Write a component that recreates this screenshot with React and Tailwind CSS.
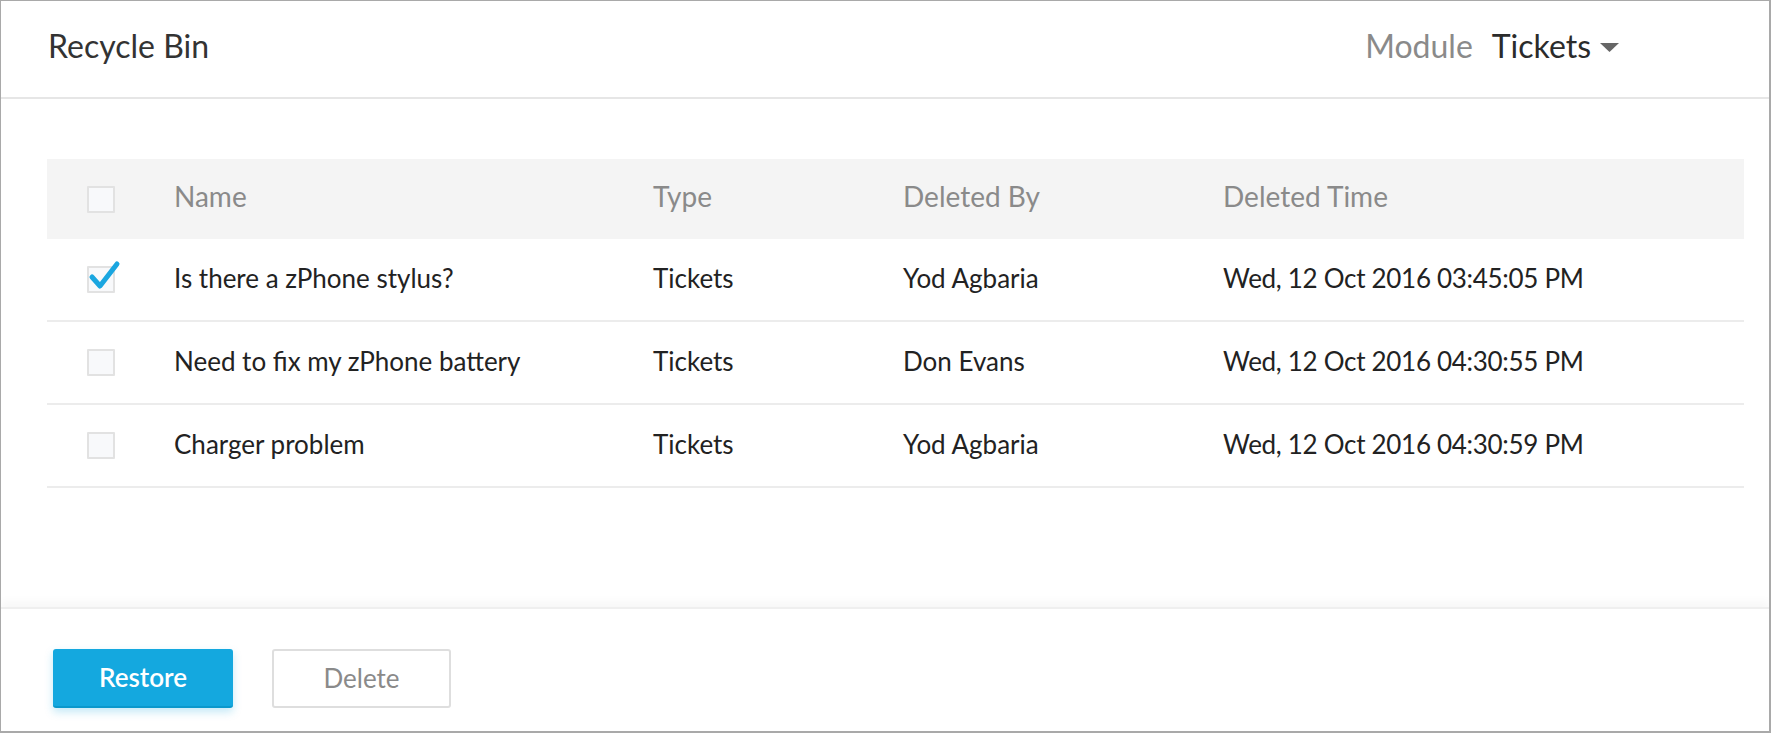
import { useState } from 'react';

const rows = [
  { id: 1, name: 'Is there a zPhone stylus?', type: 'Tickets', by: 'Yod Agbaria', time: 'Wed, 12 Oct 2016 03:45:05 PM' },
  { id: 2, name: 'Need to fix my zPhone battery', type: 'Tickets', by: 'Don Evans', time: 'Wed, 12 Oct 2016 04:30:55 PM' },
  { id: 3, name: 'Charger problem', type: 'Tickets', by: 'Yod Agbaria', time: 'Wed, 12 Oct 2016 04:30:59 PM' },
];

function Checkbox({ checked, onChange }) {
  return (
    <button type="button" onClick={onChange} className="relative w-[28px] h-[27px] border-2 border-[#e2e2e2] bg-[#f8f9fb] rounded-[1px]">
      {checked && (
        <svg className="absolute -left-[2px] -top-[9px] w-[34px] h-[34px]" viewBox="0 0 34 34" fill="none">
          <path d="M5 18 L13 27 L30 5" stroke="#1aa6e0" strokeWidth="5" strokeLinecap="round" strokeLinejoin="round" />
        </svg>
      )}
    </button>
  );
}

export default function App() {
  const [selected, setSelected] = useState([1]);

  const toggle = (id) =>
    setSelected((s) => (s.includes(id) ? s.filter((x) => x !== id) : [...s, id]));

  return (
    <div className="w-[1771px] h-[733px] flex flex-col bg-white border-l border-t border-r-2 border-b-2 border-[#a9a9a9] font-['Lato',sans-serif] overflow-hidden">
      <div className="h-[98px] shrink-0 flex items-center justify-between pl-[47px] pr-[150px] pb-[7px] border-b-2 border-[#e6e6e6]">
        <h1 className="text-[32px] text-[#333] leading-none">Recycle Bin</h1>
        <div className="flex items-center text-[32px] leading-none">
          <span className="text-[#8a8a8a]">Module</span>
          <span className="ml-[19px] text-[#2b2b2b]">Tickets</span>
          <svg className="ml-[9px] mt-[4px]" width="19" height="9" viewBox="0 0 19 9">
            <path d="M0 0 H19 L9.5 9 Z" fill="#666" />
          </svg>
        </div>
      </div>

      <div className="flex-1 pt-[60px] pl-[46px] pr-[25px]">
        <div className="grid grid-cols-[127px_479px_250px_320px_1fr] items-center h-[80px] pb-[6px] bg-[#f4f4f4] text-[28px] text-[#8a8a8a]">
          <div className="pl-[40px] pt-[6px] flex">
            <Checkbox checked={selected.length === rows.length} onChange={() => setSelected(selected.length === rows.length ? [] : rows.map((r) => r.id))} />
          </div>
          <div>Name</div>
          <div>Type</div>
          <div>Deleted By</div>
          <div>Deleted Time</div>
        </div>
        {rows.map((r) => (
          <div key={r.id} className="grid grid-cols-[127px_479px_250px_320px_1fr] items-center h-[83px] pb-[3px] border-b-2 border-[#ececec] text-[26px] text-[#222]">
            <div className="pl-[40px] pt-[3px] flex">
              <Checkbox checked={selected.includes(r.id)} onChange={() => toggle(r.id)} />
            </div>
            <div>{r.name}</div>
            <div>{r.type}</div>
            <div>{r.by}</div>
            <div className="tracking-[-0.3px]">{r.time}</div>
          </div>
        ))}
      </div>

      <div className="h-[124px] shrink-0 flex items-start gap-[39px] pt-[40px] pl-[52px] border-t-2 border-[#efefef] shadow-[0_-6px_8px_rgba(0,0,0,0.03)]">
        <button className="w-[180px] h-[59px] rounded-[3px] bg-[#14a8df] border-b-2 border-[#0a98cc] text-white text-[26px] font-semibold shadow-[0_4px_8px_rgba(20,168,223,0.25)]">
          Restore
        </button>
        <button className="w-[179px] h-[59px] rounded-[3px] border-2 border-[#dedede] bg-white text-[#8a8a8a] text-[26px]">
          Delete
        </button>
      </div>
    </div>
  );
}
